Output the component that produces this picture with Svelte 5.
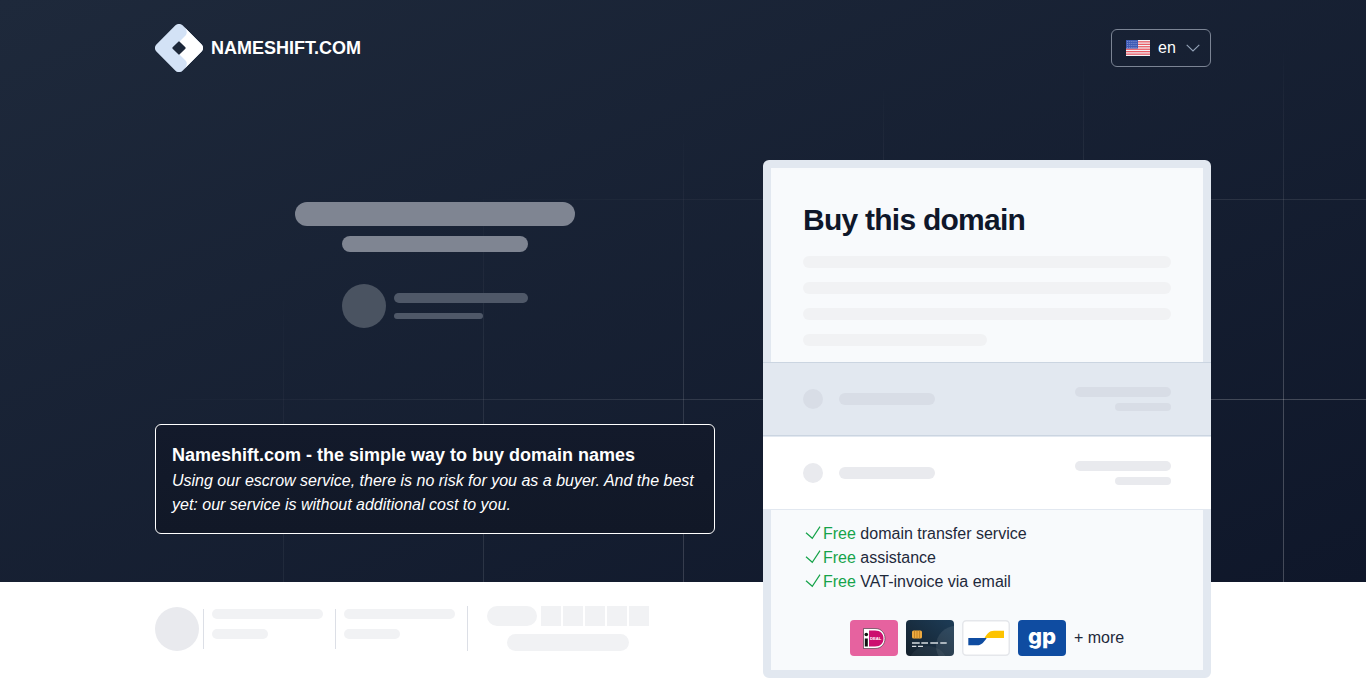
<script>
	const fullLines = [1, 2, 3];
	const squares = [1, 2, 3, 4, 5];
	const stripes = [1, 3, 5, 7, 9, 11];
	const perks = ['domain transfer service', 'assistance', 'VAT-invoice via email'];
	const stats = [1, 2];
</script>

<div class="page">
	<div class="backdrop">
		<div class="grid-lines"></div>
	</div>

	<div class="wrap">
		<header>
			<a class="brand" href="#top">
				<svg width="48" height="48" viewBox="0 0 48 48">
					<defs>
						<clipPath id="diamond">
							<rect x="5.500" y="5.500" width="37" height="37" rx="5" transform="rotate(45 24 24)" />
						</clipPath>
					</defs>
					<rect x="5.500" y="5.500" width="37" height="37" rx="5" fill="#d3e2f6" transform="rotate(45 24 24)" />
					<path
						d="M27 0C31 4 33 8 31 11L24 18L30 24L24 30L31 37C33 40 31 44 27 48H48V0Z"
						fill="#fff"
						clip-path="url(#diamond)"
					/>
					<rect x="19" y="19" width="10" height="10" rx="1" fill="#1c2739" transform="rotate(45 24 24)" />
				</svg>
				<span>NAMESHIFT.COM</span>
			</a>

			<button class="lang">
				<svg class="flag" width="24" height="16" viewBox="0 0 24 16">
					<rect width="24" height="16" fill="#f3f4f8" />
					{#each stripes as n}
						<rect y={n * 1.23} width="24" height="1.23" fill="#e8505b" />
					{/each}
					<rect width="12" height="8.600" fill="#3f5bb5" />
					<path d="M1 1.500h10M1 3.500h10M1 5.500h10M1 7.500h10" stroke="#a9b6e6" stroke-width=".7" stroke-dasharray=".8 1.100" />
				</svg>
				<span>en</span>
				<svg width="14" height="8" viewBox="0 0 14 8" fill="none">
					<path d="M.7.8 7 7l6.300-6.200" stroke="#94a3b8" stroke-width="1.100" />
				</svg>
			</button>
		</header>

		<main>
			<div class="left">
				<section class="preview">
					<div class="ph title-bar"></div>
					<div class="ph sub-bar"></div>
					<div class="seller">
						<div class="seller-avatar"></div>
						<div class="seller-lines">
							<div class="ph-dim one"></div>
							<div class="ph-dim two"></div>
						</div>
					</div>
				</section>

				<section class="notice">
					<h2>Nameshift.com - the simple way to buy domain names</h2>
					<p>Using our escrow service, there is no risk for you as a buyer. And the best yet: our service is without additional cost to you.</p>
				</section>

				<footer>
					<div class="foot-avatar"></div>
					{#each stats as s}
						<div class="stat">
							<div class="sk long"></div>
							<div class="sk short"></div>
						</div>
					{/each}
					<div class="rating">
						<div class="rating-top">
							<div class="sk pill"></div>
							{#each squares as q}
								<div class="square"></div>
							{/each}
						</div>
						<div class="sk pill-wide"></div>
					</div>
				</footer>
			</div>

			<aside class="card">
				<div class="intro">
					<h1>Buy this domain</h1>
					<div class="copy">
						{#each fullLines as l}
							<div class="sk copy-line"></div>
						{/each}
						<div class="sk copy-line last"></div>
					</div>
				</div>

				<div class="option selected">
					<div class="dot"></div>
					<div class="name"></div>
					<div class="price">
						<div class="amount"></div>
						<div class="term"></div>
					</div>
				</div>
				<div class="option">
					<div class="dot"></div>
					<div class="name"></div>
					<div class="price">
						<div class="amount"></div>
						<div class="term"></div>
					</div>
				</div>

				<div class="extras">
					<ul>
						{#each perks as perk}
							<li>
								<svg width="16" height="16" viewBox="0 0 16 16" fill="none">
									<path d="M1 6.700 7.300 12.300 15 .6" stroke="#16a34a" stroke-width="1.200" />
								</svg>
								<span><span class="free">Free</span> {perk}</span>
							</li>
						{/each}
					</ul>

					<div class="payments">
						<svg class="pay" width="48" height="36" viewBox="0 0 48 36">
							<rect width="48" height="36" rx="4" fill="#e6629f" />
							<path d="M13.500 8.500H25C31.500 8.500 35 13 35 18.500S31.500 28.500 25 28.500H13.500Z" fill="#fff" stroke="#3a2a33" stroke-width=".6" />
							<path d="M19 10.500H25C30.500 10.500 33.500 14 33.500 18.500S30.500 26.500 25 26.500H19Z" fill="#cc0f6f" />
							<rect x="14.800" y="18.500" width="3" height="8" fill="#111" />
							<circle cx="16.300" cy="14.500" r="1.800" fill="#111" />
							<text x="20" y="20.200" class="ideal">DEAL</text>
						</svg>

						<svg class="pay" width="48" height="36" viewBox="0 0 48 36">
							<defs>
								<linearGradient id="cardbg" x1="0" y1="1" x2="1" y2="0">
									<stop offset="0" stop-color="#14202b" />
									<stop offset="1" stop-color="#1d3c57" />
								</linearGradient>
								<clipPath id="cardclip"><rect width="48" height="36" rx="4" /></clipPath>
							</defs>
							<rect width="48" height="36" rx="4" fill="url(#cardbg)" />
							<g clip-path="url(#cardclip)">
								<circle cx="50" cy="26" r="20" fill="#fff" opacity=".09" />
								<circle cx="22" cy="46" r="20" fill="#fff" opacity=".05" />
							</g>
							<rect x="6" y="10.500" width="10" height="8" rx="1.500" fill="#eda93f" />
							<path d="M8.500 10.500v8M11 10.500v8M13.500 10.500v8" stroke="#b5761a" stroke-width=".7" />
							<path d="M6 23h7.700M15.300 23H22M24.300 23H32M34.300 23h6.400M6 26.300h4.300M12 26.300h5" stroke="#d5dbe0" stroke-width="1.300" />
						</svg>

						<svg class="pay" width="48" height="36" viewBox="0 0 48 36">
							<rect x=".75" y=".75" width="46.500" height="34.500" rx="3.500" fill="#fff" stroke="#e5e7eb" stroke-width="1.500" />
							<path d="M6.300 18H24.700C22 22 19.500 25.300 15 25.300H6.300Z" fill="#0f4ca1" />
							<path d="M42 10.700H32C27 10.700 25 14 22.500 18H42Z" fill="#fdc300" />
						</svg>

						<svg class="pay" width="48" height="36" viewBox="0 0 48 36">
							<rect width="48" height="36" rx="4" fill="#0f4ca1" />
							<text x="24" y="24" class="gp">gp</text>
						</svg>

						<span>+ more</span>
					</div>
				</div>
			</aside>
		</main>
	</div>
</div>

<style>
	:global(body) {
		margin: 0;
		background: #fff;
		font-family: 'Liberation Sans', Arial, sans-serif;
		color: #111827;
	}

	.page {
		position: relative;
		min-height: 681px;
		overflow: hidden;
	}

	.backdrop {
		position: absolute;
		top: 0;
		left: 0;
		right: 0;
		height: 582px;
		background: linear-gradient(to bottom right, #1e293b, #0f172a);
	}

	.grid-lines {
		position: absolute;
		inset: 0;
		background-image:
			linear-gradient(to right, rgba(255, 255, 255, 0.22) 1px, transparent 1px),
			linear-gradient(to bottom, rgba(255, 255, 255, 0.22) 1px, transparent 1px);
		background-size: 200px 200px;
		background-position: 83px 199px;
		mask-image: radial-gradient(ellipse 1300px 540px at 100% 100%, #000 30%, transparent 100%);
	}

	.wrap {
		position: relative;
		width: 1056px;
		margin: 0 auto;
	}

	header {
		display: flex;
		align-items: center;
		justify-content: space-between;
		height: 96px;
	}

	.brand {
		display: flex;
		align-items: center;
		gap: 8px;
		color: #fff;
		font-size: 18px;
		font-weight: 700;
		text-decoration: none;
	}

	.lang {
		display: flex;
		align-items: center;
		width: 100px;
		height: 38px;
		padding: 0 10px 0 14px;
		border: 1px solid #7b8494;
		border-radius: 6px;
		background: none;
		color: #fff;
		font: inherit;
		font-size: 16px;
	}

	.lang span {
		margin: 0 auto 0 8px;
	}

	main {
		display: grid;
		grid-template-columns: 560px 448px;
		justify-content: space-between;
		margin-top: 64px;
	}

	.preview {
		display: flex;
		flex-direction: column;
		align-items: center;
		padding-top: 42px;
	}

	.ph {
		background: #7f8592;
	}

	.title-bar {
		width: 280px;
		height: 24px;
		border-radius: 12px;
	}

	.sub-bar {
		width: 186px;
		height: 16px;
		margin-top: 10px;
		border-radius: 8px;
	}

	.seller {
		display: flex;
		align-items: center;
		gap: 8px;
		width: 186px;
		margin-top: 32px;
	}

	.seller-avatar {
		width: 44px;
		height: 44px;
		border-radius: 50%;
		background: #4a5361;
	}

	.seller-lines {
		display: flex;
		flex-direction: column;
		gap: 10px;
		flex: 1;
	}

	.ph-dim {
		background: #4f5868;
	}

	.one {
		height: 10px;
		border-radius: 5px;
	}

	.two {
		width: 89px;
		height: 6px;
		border-radius: 3px;
	}

	.notice {
		box-sizing: border-box;
		height: 110px;
		margin-top: 96px;
		padding: 16px;
		border: 1px solid #fff;
		border-radius: 6px;
		background: linear-gradient(#131a2b, #111827);
		color: #fff;
	}

	.notice h2 {
		margin: 0;
		font-size: 18px;
		line-height: 28px;
		font-weight: 700;
	}

	.notice p {
		margin: 0;
		font-size: 16px;
		line-height: 24px;
		font-style: italic;
	}

	footer {
		display: flex;
		align-items: center;
		height: 45px;
		margin-top: 72px;
	}

	.foot-avatar {
		flex: none;
		width: 44px;
		height: 44px;
		border-radius: 50%;
		background: #e9eaee;
	}

	.stat {
		display: flex;
		flex-direction: column;
		gap: 10px;
		box-sizing: border-box;
		width: 132px;
		height: 40px;
		margin-left: 4px;
		padding-left: 8px;
		border-left: 1px solid #dcdfe6;
	}

	.stat + .stat {
		margin-left: 0;
	}

	.sk {
		background: #f1f2f4;
	}

	.long {
		width: 111px;
		height: 10px;
		border-radius: 5px;
	}

	.short {
		width: 56px;
		height: 10px;
		border-radius: 5px;
	}

	.rating {
		display: flex;
		flex-direction: column;
		align-items: center;
		gap: 8px;
		box-sizing: border-box;
		width: 182px;
		height: 45px;
		padding-left: 19px;
		border-left: 1px solid #dcdfe6;
	}

	.rating-top {
		display: flex;
		gap: 2px;
	}

	.pill {
		width: 50px;
		height: 20px;
		margin-right: 2px;
		border-radius: 10px;
	}

	.square {
		width: 20px;
		height: 20px;
		background: #f1f2f4;
	}

	.pill-wide {
		width: 122px;
		height: 17px;
		border-radius: 9px;
	}

	.card {
		box-sizing: border-box;
		height: 518px;
		border: 8px solid #e2e8f0;
		border-radius: 6px;
		background: #f8fafc;
	}

	.intro {
		padding: 32px 32px 16px;
	}

	h1 {
		margin: 0 0 16px;
		font-size: 30px;
		line-height: 40px;
		font-weight: 700;
		letter-spacing: -0.75px;
		color: #0f172a;
	}

	.copy {
		display: flex;
		flex-direction: column;
		gap: 14px;
	}

	.copy-line {
		height: 12px;
		border-radius: 6px;
	}

	.copy-line.last {
		width: 184px;
	}

	.option {
		display: flex;
		align-items: center;
		box-sizing: border-box;
		height: 74px;
		margin: 0 -8px;
		padding: 0 40px;
		border-top: 1px solid #e2e8f0;
		border-bottom: 1px solid #e2e8f0;
		background: #fff;
	}

	.option.selected {
		border-color: #cbd5e1;
		background: #e2e8f0;
	}

	.dot {
		width: 20px;
		height: 20px;
		border-radius: 50%;
		background: #e9eaee;
	}

	.name {
		width: 96px;
		height: 12px;
		margin-left: 16px;
		border-radius: 6px;
		background: #e9eaee;
	}

	.price {
		display: flex;
		flex-direction: column;
		align-items: flex-end;
		gap: 6px;
		margin-left: auto;
	}

	.amount {
		width: 96px;
		height: 10px;
		border-radius: 5px;
		background: #e9eaee;
	}

	.term {
		width: 56px;
		height: 8px;
		border-radius: 4px;
		background: #e9eaee;
	}

	.selected .dot,
	.selected .name,
	.selected .amount,
	.selected .term {
		background: #d8dde6;
	}

	.extras {
		padding: 12px 34px 0;
	}

	ul {
		margin: 0;
		padding: 0;
		list-style: none;
		font-size: 16px;
		line-height: 24px;
		color: #1e293b;
	}

	li {
		display: flex;
		align-items: center;
		gap: 2px;
	}

	.free {
		color: #16a34a;
	}

	.payments {
		display: flex;
		align-items: center;
		justify-content: center;
		gap: 8px;
		margin-top: 26px;
		font-size: 16px;
		color: #1e293b;
	}

	.ideal {
		font-size: 4.200px;
		font-weight: 700;
		fill: #fff;
	}

	.gp {
		font-family: Inter, 'Liberation Sans', sans-serif;
		font-size: 22px;
		font-weight: 800;
		fill: #fff;
		text-anchor: middle;
	}
</style>
